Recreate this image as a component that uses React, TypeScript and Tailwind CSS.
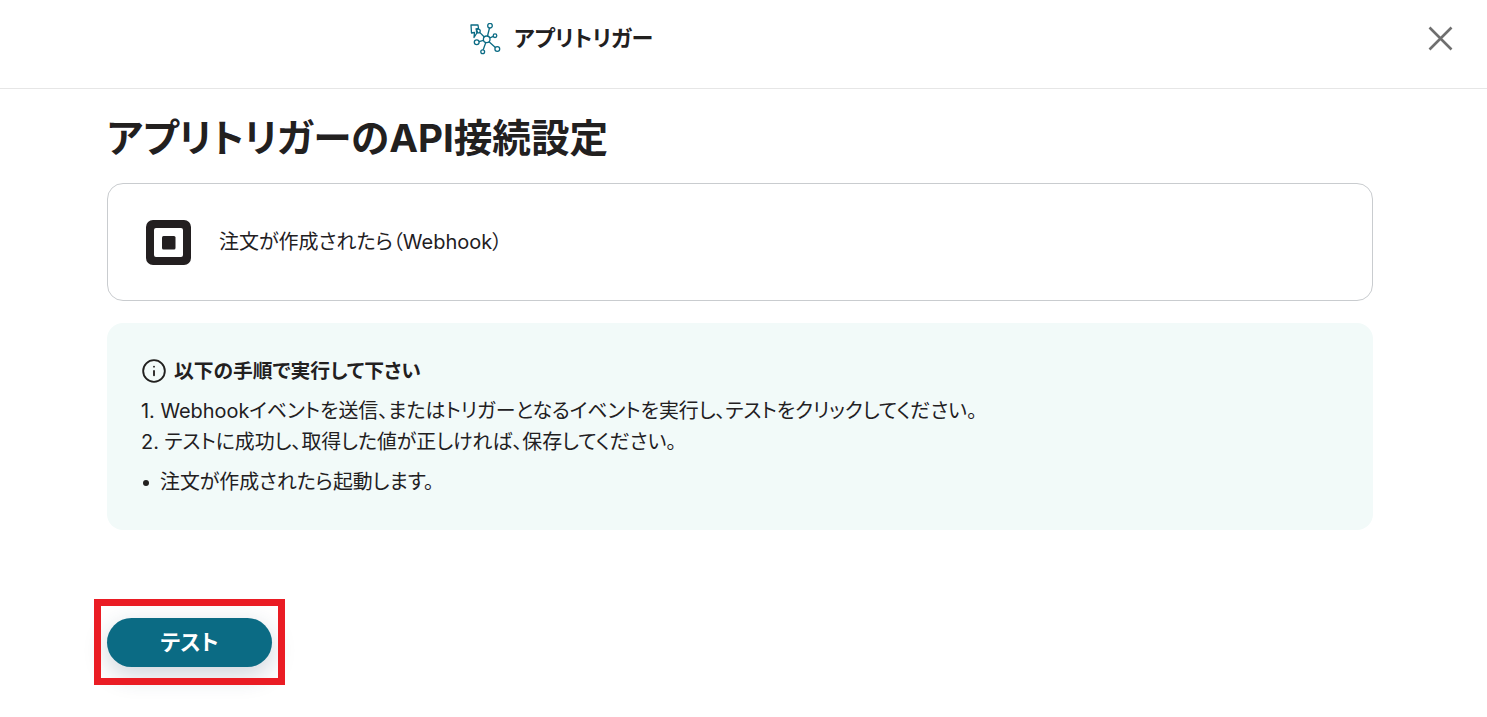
import { Info } from "lucide-react";

const font = { fontFeatureSettings: '"palt"' };

function TriggerIcon() {
  return (
    <svg width="32" height="32" viewBox="0 0 32 32" fill="none" stroke="#0b6b84" strokeWidth="1.3">
      <path d="M2 2h7l.5 3.5-2.5.5 1.5 3-3.5 5.5.5-5-3 .5z" strokeLinejoin="round" />
      <circle cx="17.7" cy="16.3" r="3.3" />
      <circle cx="21" cy="2.7" r="2.3" />
      <circle cx="26" cy="12.7" r="1.8" />
      <circle cx="28.3" cy="26" r="2.4" />
      <circle cx="7.7" cy="19.3" r="2.4" />
      <circle cx="13.7" cy="28.7" r="1.9" />
      <circle cx="9.3" cy="8" r="1.9" />
      <path d="M18.5 13l2-8M20.8 14.8l3.6-1.4M20 18.8l6.4 5.6M14.5 17.4l-4.5 1.3M16.8 19.5l-2.6 7.3M15.3 14l-4.6-4.6" />
    </svg>
  );
}

function SquareLogo() {
  return (
    <svg width="45" height="45" viewBox="0 0 45 45">
      <path
        fillRule="evenodd"
        fill="#231f20"
        d="M7 0h31a7 7 0 0 1 7 7v31a7 7 0 0 1-7 7H7a7 7 0 0 1-7-7V7a7 7 0 0 1 7-7zM10 8a2 2 0 0 0-2 2v25a2 2 0 0 0 2 2h25a2 2 0 0 0 2-2V10a2 2 0 0 0-2-2z"
      />
      <rect x="16" y="16" width="13.5" height="13.5" rx="1.5" fill="#231f20" />
    </svg>
  );
}

export default function App() {
  return (
    <div
      className="h-[717px] w-[1487px] overflow-hidden bg-white text-[#22201f]"
      style={font}
    >
      <div className="[font-family:Inter,'Noto_Sans_CJK_JP',sans-serif]">
        <header className="relative flex h-[89px] items-center border-b border-[#e6e6e6] pl-[469px]">
          <div className="flex items-center gap-[13px] pb-[10px]">
            <TriggerIcon />
            <span className="-mt-[2px] text-[22px] font-bold leading-[28px]">アプリトリガー</span>
          </div>
          <svg
            className="absolute left-[1428px] top-[26px]"
            width="25"
            height="25"
            viewBox="0 0 25 25"
            stroke="#6f6f6f"
            strokeWidth="2.6"
          >
            <path d="M1.5 1.5l22 22M23.5 1.5l-22 22" />
          </svg>
        </header>

        <main className="pl-[107px] pr-[114px]">
          <h1 className="mt-[24px] text-[38.6px] font-bold leading-[50px]">アプリトリガーのAPI接続設定</h1>

          <div className="mt-[20px] flex h-[118px] items-center gap-[28px] rounded-[16px] border border-[#c9cccf] pl-[38px]">
            <SquareLogo />
            <span className="text-[20px] leading-[24px]">注文が作成されたら（Webhook）</span>
          </div>

          <section className="mt-[22px] h-[207px] rounded-[16px] bg-[#f2faf9] px-[34px] pt-[34px] text-[19.9px]">
            <div className="flex h-[28px] items-center gap-[7px] font-bold leading-[28px]">
              <Info size={26} strokeWidth={1.7} />
              <span className="text-[19.8px]">以下の手順で実行して下さい</span>
            </div>
            <ol className="mt-[11px] leading-[31px]">
              <li>1. Webhookイベントを送信、またはトリガーとなるイベントを実行し、テストをクリックしてください。</li>
              <li>2. テストに成功し、取得した値が正しければ、保存してください。</li>
            </ol>
            <ul className="mt-[9px] leading-[31px]">
              <li className="flex items-center">
                <span className="ml-[2px] mr-[11px] h-[6px] w-[6px] rounded-full bg-[#22201f]" />
                注文が作成されたら起動します。
              </li>
            </ul>
          </section>

          <div className="relative mt-[88px] h-[49px] w-[165px]">
            <button className="h-[49px] w-[165px] rounded-full bg-[#0b6b84] text-[21.5px] font-bold text-white shadow-[0_8px_24px_rgba(30,60,90,0.22)]">
              テスト
            </button>
            <div className="absolute -left-[13px] -top-[19px] h-[86px] w-[191px] border-[7px] border-[#ea1c24]" />
          </div>
        </main>
      </div>
    </div>
  );
}
